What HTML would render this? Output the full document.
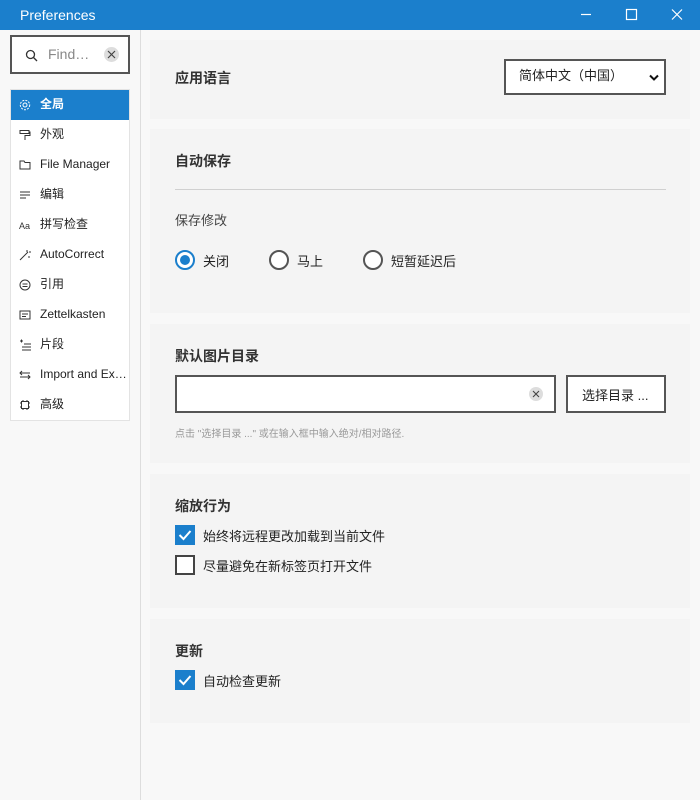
<!DOCTYPE html>
<html><head><meta charset="utf-8"><style>
*{box-sizing:border-box;margin:0;padding:0}
body{width:700px;height:800px;background:#f8f8f8;font-family:"Liberation Sans","Noto Sans CJK SC",sans-serif;color:#222;position:relative;overflow:hidden;font-size:13px}
.a{position:absolute}
span.a,h3{line-height:1.15}
.tb{left:0;top:0;width:700px;height:30px;background:#1b7fcc;color:#fff}
.card{background:#f4f4f4;left:150px;width:540px}
h3{font-size:14px;font-weight:bold;position:absolute;left:25px;color:#333}
.nav{left:10px;top:89px;width:120px;height:332px;background:#fff;border:1px solid #e3e3e3}
.it{height:30px;display:flex;align-items:center;padding-left:8px;font-size:12px;color:#222;line-height:1.1}
.it svg{width:12px;height:12px;margin-right:9px;flex:none}
.it.s{background:#1b7fcc;color:#fff;font-weight:bold}
.cb{width:20px;height:20px;border:2px solid #444;background:#fff}
.cb.on{background:#1b7fcc;border-color:#1b7fcc}
.rd{width:20px;height:20px;border:2px solid #555;border-radius:50%;background:#fff}
</style></head><body>
<div class="a tb"><span class="a" style="left:20px;top:7px;font-size:14px">Preferences</span>
<svg class="a" style="left:570px;top:8px" width="120" height="14" stroke="#fff" stroke-width="1.2" fill="none"><path d="M11 6.5h10"/><rect x="56.5" y="1.5" width="10" height="10"/><path d="M102 1.5l10 10M112 1.5l-10 10"/></svg></div>
<div class="a" style="left:140px;top:30px;width:1px;height:770px;background:#ddd"></div>
<div class="a" style="left:10px;top:35px;width:120px;height:39px;border:2px solid #555;background:#fff">
<svg class="a" style="left:13px;top:12px" width="13" height="13" fill="none" stroke="#333" stroke-width="1.3"><circle cx="5.5" cy="5.5" r="4"/><path d="M8.5 8.5l3.5 3.5"/></svg>
<span class="a" style="left:36px;top:9px;color:#888;font-size:14px">Find…</span>
<div class="a" style="left:92px;top:10px;width:15px;height:15px;border-radius:50%;background:#ddd"></div>
<svg class="a" style="left:95px;top:13px" width="9" height="9" stroke="#444" stroke-width="1.2"><path d="M1 1l7 7M8 1l-7 7"/></svg></div>
<div class="a nav">
<div class="it s"><svg viewBox="0 0 12 12" fill="none" stroke="#fff"><circle cx="6" cy="6" r="2"/><circle cx="6" cy="6" r="4.7" stroke-dasharray="2 1.2"/></svg>全局</div>
<div class="it"><svg viewBox="0 0 12 12" fill="none" stroke="#333"><path d="M1 1.5h9v3H1zM10 3h1v3.5H6V11"/></svg>外观</div>
<div class="it"><svg viewBox="0 0 12 12" fill="none" stroke="#333"><path d="M1 2h4l1 1.5h5V10H1z"/></svg>File Manager</div>
<div class="it"><svg viewBox="0 0 12 12" stroke="#333"><path d="M1 3h10M1 6h10M1 9h6"/></svg>编辑</div>
<div class="it"><svg viewBox="0 0 12 12"><text x="0" y="10" font-size="9" fill="#333" font-family="Liberation Sans">Aa</text></svg>拼写检查</div>
<div class="it"><svg viewBox="0 0 12 12" stroke="#333" fill="none"><path d="M1 11l8-8M8 1v2M10 3h2M10 7v2"/></svg>AutoCorrect</div>
<div class="it"><svg viewBox="0 0 12 12" stroke="#333" fill="none"><circle cx="6" cy="6" r="5"/><path d="M3.5 5h5M3.5 7.5h5"/></svg>引用</div>
<div class="it"><svg viewBox="0 0 12 12" stroke="#333" fill="none"><rect x="1" y="2" width="10" height="8"/><path d="M3 5h6M3 7.5h4"/></svg>Zettelkasten</div>
<div class="it"><svg viewBox="0 0 12 12" stroke="#333" fill="none"><path d="M1 2h3M2.5 .5v3M5 5h7M3 8h9M3 11h9"/></svg>片段</div>
<div class="it"><svg viewBox="0 0 12 12" stroke="#333" fill="none"><path d="M1 4h10M3 2L1 4l2 2M11 8H1M9 6l2 2-2 2"/></svg>Import and Ex…</div>
<div class="it"><svg viewBox="0 0 12 12" stroke="#333" fill="none"><rect x="2.5" y="2.5" width="7" height="7"/><path d="M4 1v1.5M8 1v1.5M4 9.5V11M8 9.5V11M1 4h1.5M1 8h1.5M9.5 4H11M9.5 8H11"/></svg>高级</div>
</div>

<div class="a card" style="top:40px;height:79px"><h3 style="top:30px">应用语言</h3>
<div class="a" style="left:354px;top:19px;width:162px;height:36px;border:2px solid #555;background:#fff"><span class="a" style="left:13px;top:8px;font-size:13px">简体中文（中国）</span>
<svg class="a" style="left:143px;top:13px" width="10" height="8" fill="none" stroke="#111" stroke-width="2"><path d="M1 1.5l4 4 4-4"/></svg></div></div>

<div class="a card" style="top:129px;height:184px"><h3 style="top:24px">自动保存</h3>
<div class="a" style="left:25px;top:60px;width:491px;height:1px;background:#d0d0d0"></div>
<span class="a" style="left:25px;top:85px;color:#444">保存修改</span>
<div class="a rd" style="left:25px;top:121px;border-color:#1b7fcc"><div class="a" style="left:3px;top:3px;width:10px;height:10px;border-radius:50%;background:#1b7fcc"></div></div><span class="a" style="left:53px;top:126px">关闭</span>
<div class="a rd" style="left:119px;top:121px"></div><span class="a" style="left:147px;top:126px">马上</span>
<div class="a rd" style="left:213px;top:121px"></div><span class="a" style="left:241px;top:126px">短暂延迟后</span></div>

<div class="a card" style="top:324px;height:139px"><h3 style="top:24px">默认图片目录</h3>
<div class="a" style="left:25px;top:51px;width:381px;height:38px;border:2px solid #555;background:#fff">
<div class="a" style="left:352px;top:10px;width:14px;height:14px;border-radius:50%;background:#ddd"></div>
<svg class="a" style="left:355px;top:13px" width="8" height="8" stroke="#444" stroke-width="1.1"><path d="M1 1l6 6M7 1l-6 6"/></svg></div>
<div class="a" style="left:416px;top:51px;width:100px;height:38px;border:2px solid #555;background:#fff"><span class="a" style="left:14px;top:12px;font-size:13px">选择目录 ...</span></div>
<span class="a" style="left:25px;top:105px;color:#999;font-size:10px">点击 "选择目录 ..." 或在输入框中输入绝对/相对路径.</span></div>

<div class="a card" style="top:474px;height:134px"><h3 style="top:24px">缩放行为</h3>
<div class="a cb on" style="left:25px;top:51px"><svg class="a" style="left:1px;top:2px" width="14" height="12" fill="none" stroke="#fff" stroke-width="2"><path d="M1.5 6l4 4 7-8"/></svg></div><span class="a" style="left:53px;top:56px">始终将远程更改加载到当前文件</span>
<div class="a cb" style="left:25px;top:81px"></div><span class="a" style="left:53px;top:86px">尽量避免在新标签页打开文件</span></div>

<div class="a card" style="top:619px;height:104px"><h3 style="top:24px">更新</h3>
<div class="a cb on" style="left:25px;top:51px"><svg class="a" style="left:1px;top:2px" width="14" height="12" fill="none" stroke="#fff" stroke-width="2"><path d="M1.5 6l4 4 7-8"/></svg></div><span class="a" style="left:53px;top:56px">自动检查更新</span></div>
</body></html>
